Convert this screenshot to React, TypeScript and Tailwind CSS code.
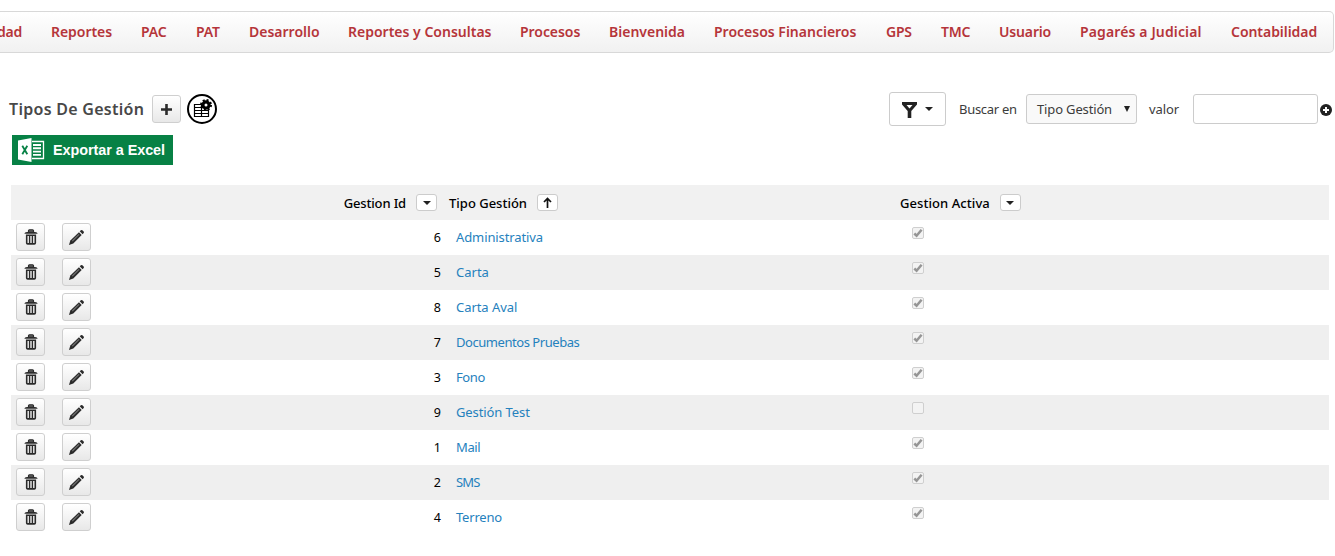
import React from "react";

const nav = [
  { label: "dad", cls: "w-[22px] flex justify-end tracking-[-0.2px]" },
  { label: "Reportes", cls: "w-[61px] tracking-[-0.05px]" },
  { label: "PAC", cls: "w-[26px] tracking-[-0.2px]" },
  { label: "PAT", cls: "w-[24px] tracking-[-0.2px]" },
  { label: "Desarrollo", cls: "w-[70px]" },
  { label: "Reportes y Consultas", cls: "w-[143px]" },
  { label: "Procesos", cls: "w-[60px] tracking-[-0.05px]" },
  { label: "Bienvenida", cls: "w-[76px]" },
  { label: "Procesos Financieros", cls: "w-[143px]" },
  { label: "GPS", cls: "w-[26px] tracking-[-0.2px]" },
  { label: "TMC", cls: "w-[29px] tracking-[-0.2px]" },
  { label: "Usuario", cls: "w-[52px] tracking-[-0.15px]" },
  { label: "Pagarés a Judicial", cls: "w-[122px] tracking-[0.13px]" },
  { label: "Contabilidad", cls: "w-[87px] tracking-[-0.05px]" },
];

const rows = [
  { id: 6, name: "Administrativa", active: true, cls: "tracking-[-0.1px]" },
  { id: 5, name: "Carta", active: true, cls: "" },
  { id: 8, name: "Carta Aval", active: true, cls: "tracking-[-0.05px]" },
  { id: 7, name: "Documentos Pruebas", active: true, cls: "tracking-[-0.45px]" },
  { id: 3, name: "Fono", active: true, cls: "tracking-[-0.4px]" },
  { id: 9, name: "Gestión Test", active: false, cls: "tracking-[-0.1px]" },
  { id: 1, name: "Mail", active: true, cls: "tracking-[-0.4px]" },
  { id: 2, name: "SMS", active: true, cls: "tracking-[-0.9px]" },
  { id: 4, name: "Terreno", active: true, cls: "tracking-[-0.2px]" },
];

const buttonCls =
  "flex h-[28px] w-[29px] items-center justify-center rounded-[3px] border border-[#cfcfcf] bg-linear-to-b from-white to-[#e8e8e8]";

function TrashIcon() {
  return (
    <svg width="14" height="16" viewBox="0 0 14 16" fill="none" stroke="#2b2b2b">
      <path d="M4.500 3V1.700q0-.9.900-.9h3.200q.9 0 .9.900V3z" fill="#777" strokeWidth="1.200" />
      <path d="M.3 4.700Q.6 3 3 3h8q2.400 0 2.700 1.700z" fill="#2b2b2b" stroke="none" />
      <path d="M2.700 6.200v7.700q0 1 1 1h6.600q1 0 1-1V6.200z" strokeWidth="1.600" />
      <path d="M5.600 7v7.500M8.400 7v7.500" strokeWidth="1.400" />
    </svg>
  );
}

function PencilIcon() {
  return (
    <svg width="17" height="17" viewBox="0 0 18 18">
      <path d="M1 17l1.500-4.800L11.600 3.400l2.900 2.900L5.600 15.300z" fill="#2b2b2b" />
      <path d="M4.500 12.800l7.200-7.200" stroke="#777" strokeWidth="1.100" />
      <path d="M12.400 2.500l1.200-1.200q.8-.7 1.600 0l1.400 1.400q.7.8 0 1.600l-1.200 1.200z" fill="#2b2b2b" />
    </svg>
  );
}

function Caret() {
  return (
    <svg width="8" height="4" viewBox="0 0 8 4">
      <path d="M0 0h8L4 4z" fill="#222" />
    </svg>
  );
}

function SortButton({ up = false }: { up?: boolean }) {
  return (
    <span className="flex h-[17px] w-[21px] shrink-0 items-center justify-center rounded-[3px] border border-[#ccc] bg-white">
      {up ? (
        <svg width="9" height="11" viewBox="0 0 9 11" fill="none" stroke="#111" strokeWidth="1.700">
          <path d="M4.500 11V1.500M1 5l3.500-3.600L8 5" />
        </svg>
      ) : (
        <Caret />
      )}
    </span>
  );
}

function Check({ on }: { on: boolean }) {
  return (
    <span className="flex h-[12px] w-[12px] items-center justify-center rounded-[2px] border border-[#cfcfcf] bg-[#f3f3f3]">
      {on && (
        <svg width="10" height="10" viewBox="0 0 10 10" fill="none" stroke="#959595" strokeWidth="2.500">
          <path d="M1.300 5.500l2.300 2.200L8.600 1.800" />
        </svg>
      )}
    </span>
  );
}

function ExcelIcon() {
  return (
    <svg width="27" height="24" viewBox="0 0 27 24">
      <path d="M14 3.500h11.500v17H14" fill="none" stroke="#fff" strokeWidth="1.300" />
      <path d="M15 7h8M15 10.300h8M15 13.600h8M15 16.900h8" stroke="#fff" strokeWidth="1.900" />
      <path d="M0 2.500L13.500 0v24L0 21.500z" fill="#fff" />
      <path d="M4.300 7.800l5 8.400M9.300 7.800l-5 8.400" stroke="#078145" strokeWidth="1.800" />
    </svg>
  );
}

function TableGearIcon() {
  return (
    <svg width="30" height="30" viewBox="0 0 30 30" fill="none" stroke="#000">
      <circle cx="15" cy="15" r="14" fill="#fff" strokeWidth="2" />
      <path d="M7.500 10.500h14v12h-14zM7.500 13.500h14M7.500 16.500h14M7.500 19.500h14M14.500 10.500v12" strokeWidth="1.200" />
      <circle cx="19" cy="11" r="3.100" fill="#fff" strokeWidth="3.200" />
      <circle cx="19" cy="11" r="5" strokeWidth="2" strokeDasharray="2 1.927" />
    </svg>
  );
}

export default function App() {
  return (
    <div className="h-[556px] w-[1335px] overflow-hidden bg-white pt-[11px] font-['Noto_Sans',sans-serif] text-[13px] whitespace-nowrap">
      <nav className="flex h-[42px] w-[1334px] items-center gap-[29px] rounded-r-[5px] border border-l-0 border-[#d8d8d8] bg-linear-to-b from-white to-[#f1f1f1] pb-[2px] text-[14px] font-semibold text-[#b5353a]">
        {nav.map((n) => (
          <a key={n.label} className={n.cls}>{n.label}</a>
        ))}
      </nav>

      <header className="flex h-[72px] items-end pl-[9px]">
        <div className="flex h-[32px] w-full items-center">
          <h1 className="w-[143px] text-[16px] font-semibold tracking-[0.28px] text-[#484848]">Tipos De Gestión</h1>
          <button className={buttonCls}>
            <svg width="11" height="11" viewBox="0 0 11 11">
              <path d="M5.500 0v11M0 5.500h11" stroke="#2b2b2b" strokeWidth="2.600" />
            </svg>
          </button>
          <span className="ml-[6px]"><TableGearIcon /></span>
          <button className="ml-[672px] flex h-[34px] w-[57px] items-center justify-center gap-[8px] rounded-[3px] border border-[#ccc]">
            <svg className="mt-[2px]" width="15" height="16" viewBox="0 0 15 16">
              <path d="M0 0h15v2.500L9.300 9v7H5.700V9L0 2.500z" fill="#222" />
              <path d="M4.500 3h6L7.500 6.500z" fill="#fff" />
            </svg>
            <Caret />
          </button>
          <span className="ml-[13px] w-[67px] pt-[1px] tracking-[-0.3px] text-[#3c3c3c]">Buscar en</span>
          <span className="flex h-[30px] w-[111px] items-center justify-between rounded-[3px] border border-[#ccc] bg-[#f9f9f9] pr-[6px] pl-[10px] tracking-[-0.15px] text-[#3c3c3c]">
            <span className="pt-[1px]">Tipo Gestión</span>
            <svg width="6" height="6" viewBox="0 0 6 6"><path d="M0 0h6L3 6z" fill="#222" /></svg>
          </span>
          <span className="ml-[12px] w-[44px] pt-[1px] tracking-[-0.1px] text-[#3c3c3c]">valor</span>
          <input className="h-[30px] w-[125px] rounded-[3px] border border-[#ccc] bg-white" />
          <svg className="mt-[2px] ml-[2px] shrink-0" width="12" height="12" viewBox="0 0 12 12">
            <circle cx="6" cy="6" r="6" fill="#222" />
            <path d="M6 3v6M3 6h6" stroke="#fff" strokeWidth="2" />
          </svg>
        </div>
      </header>

      <button className="mt-[10px] ml-[12px] flex h-[30px] w-[161px] items-center bg-[#078145] pl-[6px] font-['Liberation_Sans',sans-serif] text-[14.4px] font-bold text-white">
        <ExcelIcon />
        <span className="ml-[8px] pt-[2px] tracking-[-0.05px]">Exportar a Excel</span>
      </button>

      <section className="mt-[20px] ml-[11px] w-[1318px]">
        <div className="flex h-[35px] items-center bg-[#f1f1f1] font-medium text-black">
          <div className="flex w-[438px] items-center justify-end pr-[12px]">
            <span className="mr-[10px] pt-[2px] tracking-[-0.15px]">Gestion Id</span>
            <SortButton />
          </div>
          <div className="flex w-[451px] items-center">
            <span className="mr-[10px] pt-[2px]">Tipo Gestión</span>
            <SortButton up />
          </div>
          <span className="mr-[10px] pt-[2px] tracking-[0.07px]">Gestion Activa</span>
          <SortButton />
        </div>
        <div>
          {rows.map((r) => (
            <div key={r.id} className="flex h-[35px] items-center odd:bg-white even:bg-[#efefef]">
              <div className="-mt-px flex w-[400px] gap-[17px] pl-[5px]">
                <button className={buttonCls}><TrashIcon /></button>
                <button className={buttonCls}><PencilIcon /></button>
              </div>
              <span className="w-[30px] pt-[1px] text-right text-[12.5px] text-black">{r.id}</span>
              <span className="ml-[15px] w-[456px] text-[#2581bd]"><a className={r.cls}>{r.name}</a></span>
              <span className="-mt-[9px]"><Check on={r.active} /></span>
            </div>
          ))}
        </div>
      </section>
    </div>
  );
}
